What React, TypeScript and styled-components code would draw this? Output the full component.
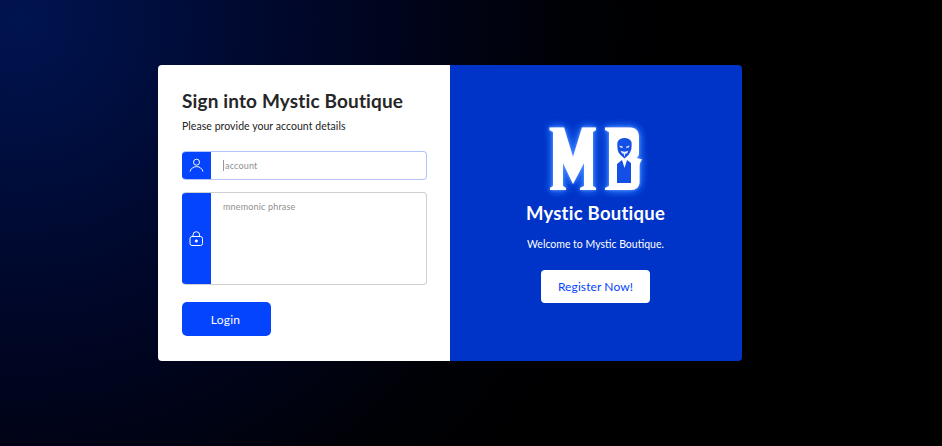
import React from "react";
import styled, { createGlobalStyle } from "styled-components";

const Global = createGlobalStyle`
  html, body { margin: 0; padding: 0; height: 100%; }
  body { background: #000; font-family: Lato, "Open Sans", "Liberation Sans", sans-serif; }
  #root { height: 100%; }
  * { box-sizing: border-box; }
`;

const Page = styled.main`
  width: 942px;
  height: 446px;
  overflow: hidden;
  padding: 65px 0 0 158px;
  background: radial-gradient(circle 660px at 20px 20px, #001450 0%, #000f42 16%, #000b34 30%, #00072a 42%, #00041a 60%, #000106 82%, #000 100%);
`;

const Card = styled.section`
  width: 584px;
  height: 296px;
  display: flex;
  border-radius: 4px;
  overflow: hidden;
`;

const LoginPane = styled.div`
  width: 292px;
  background: #fff;
  padding: 24px 23px 0 24px;
`;

const Title = styled.h1`
  margin: 0;
  font-size: 19px;
  line-height: 24px;
  font-weight: 700;
  color: #262626;
  letter-spacing: 0.14px;
`;

const Subtitle = styled.p`
  margin: 5px 0 0;
  font-size: 10.5px;
  line-height: 16px;
  letter-spacing: 0.05px;
  color: #222;
`;

const FieldRow = styled.label<{ $h: number; $top: number; $active?: boolean }>`
  display: flex;
  height: ${(p) => p.$h}px;
  margin-top: ${(p) => p.$top}px;
  border: 1px solid ${(p) => (p.$active ? "#b4c3fb" : "#cfcfd4")};
  border-left: 0;
  border-radius: 4px;
  overflow: hidden;
`;

const IconCell = styled.span`
  flex: 0 0 29px;
  background: #0544fd;
  display: flex;
  align-items: center;
  justify-content: center;
  margin: -1px 0;
`;

const Placeholder = styled.span<{ $top: number }>`
  padding: ${(p) => p.$top}px 0 0 12px;
  font-size: 9px;
  line-height: 12px;
  letter-spacing: 0.17px;
  color: #8f8f8f;
`;

const Caret = styled.i`
  display: inline-block;
  width: 1px;
  height: 11px;
  margin: 0 1px -2px 0;
  background: #999;
`;

const LoginButton = styled.button`
  display: block;
  width: 89px;
  height: 34px;
  margin-top: 17px;
  padding: 0 2px 0 0;
  border: 0;
  border-radius: 5px;
  background: #0544fd;
  color: #fff;
  font: 400 12px Lato, sans-serif;
  letter-spacing: 0.2px;
`;

const BrandPane = styled.div`
  width: 292px;
  background: #0033c7;
  color: #fff;
  display: flex;
  flex-direction: column;
  align-items: center;
  padding: 62px 1px 0 0;
`;

const Logo = styled.svg`
  display: block;
  width: 93px;
  height: 63px;
  overflow: visible;
`;

const BrandName = styled.h2`
  margin: 11px 0 0;
  font-size: 18.5px;
  line-height: 24px;
  font-weight: 700;
  letter-spacing: 0.25px;
`;

const Welcome = styled.p`
  margin: 12px 0 0;
  font-size: 10.5px;
  line-height: 14px;
`;

const RegisterButton = styled.button`
  width: 109px;
  height: 33px;
  margin-top: 19px;
  border: 0;
  border-radius: 4px;
  background: #fff;
  color: #0544fd;
  font: 400 12px Lato, sans-serif;
  letter-spacing: 0.1px;
`;

const UserIcon = () => (
  <svg width="15" height="15" viewBox="0 0 15 15" fill="none" stroke="#fff" strokeWidth="1">
    <circle cx="7.5" cy="4.2" r="3" />
    <path d="M1 13.5C2 10.2 4.6 8.6 7.5 8.6S13 10.2 14 13.5" />
  </svg>
);

const LockIcon = () => (
  <svg width="15" height="16" viewBox="0 0 15 16" fill="none" stroke="#fff" strokeWidth="1">
    <rect x="1" y="5.5" width="12.5" height="9" rx="2" />
    <path d="M4 5.5V4a3.3 3.3 0 0 1 6.6 0v1.5" />
    <circle cx="7.3" cy="10" r="1.1" fill="#fff" />
  </svg>
);

const MbLogo = () => (
  <Logo viewBox="549 127 93 63">
    <defs>
      <filter id="glow" x="-30%" y="-30%" width="160%" height="160%">
        <feGaussianBlur in="SourceAlpha" stdDeviation="1.5" result="near" />
        <feGaussianBlur in="SourceAlpha" stdDeviation="5" result="far" />
        <feFlood floodColor="#5a9bff" />
        <feComposite in2="near" operator="in" result="nearGlow" />
        <feFlood floodColor="#2f78ff" />
        <feComposite in2="far" operator="in" result="farGlow" />
        <feMerge>
          <feMergeNode in="farGlow" />
          <feMergeNode in="farGlow" />
          <feMergeNode in="nearGlow" />
          <feMergeNode in="SourceGraphic" />
        </feMerge>
      </filter>
    </defs>
    <g filter="url(#glow)">
      <path
        fill="#fff"
        d="M549.5 127.5H564L573 157 582 127.5H596V130L593 132V186L596 188V190H580V188L584 186V163L573 184 563 163V186L566 188V190H550V188L553 186V132L549.5 130Z"
      />
      <path
        fill="#fff"
        d="M605 127.5H630C636 127.5 639 131 639 138V153C639 155 638 157 636.5 158L642 159.5C640 162 639.5 164 639.5 167V182C639.5 187 636 190 631 190H605V188L609 186V132L605 130Z"
      />
    </g>
    <path fill="#1450e6" d="M617 164L622 160 624.5 168 627 160 631 163V183H617Z" />
    <path fill="#1450e6" d="M617.5 142C619.5 136.5 629.5 136.5 631.5 142 632 147 631.5 151 628.5 155L624.5 158.5 620.5 155C617.5 152 617 147 617.5 142Z" />
    <path fill="#fff" fillOpacity="0.9" d="M619.5 145.5L623 146.8 622.4 148 620 147.2ZM629.5 145.5L626 146.8 626.6 148 629 147.2ZM620.5 150.5C622 152 627 152 628.5 150.5L627 153.5H622ZM623.5 153.5H625.5L624.5 157Z" />
  </Logo>
);

export default function App() {
  return (
    <>
      <Global />
      <Page>
        <Card>
          <LoginPane>
            <Title>Sign into Mystic Boutique</Title>
            <Subtitle>Please provide your account details</Subtitle>
            <FieldRow $h={29} $top={17} $active>
              <IconCell>
                <UserIcon />
              </IconCell>
              <Placeholder $top={8}>
                <Caret />
                account
              </Placeholder>
            </FieldRow>
            <FieldRow $h={93} $top={12}>
              <IconCell>
                <LockIcon />
              </IconCell>
              <Placeholder $top={8}>mnemonic phrase</Placeholder>
            </FieldRow>
            <LoginButton>Login</LoginButton>
          </LoginPane>
          <BrandPane>
            <MbLogo />
            <BrandName>Mystic Boutique</BrandName>
            <Welcome>Welcome to Mystic Boutique.</Welcome>
            <RegisterButton>Register Now!</RegisterButton>
          </BrandPane>
        </Card>
      </Page>
    </>
  );
}
